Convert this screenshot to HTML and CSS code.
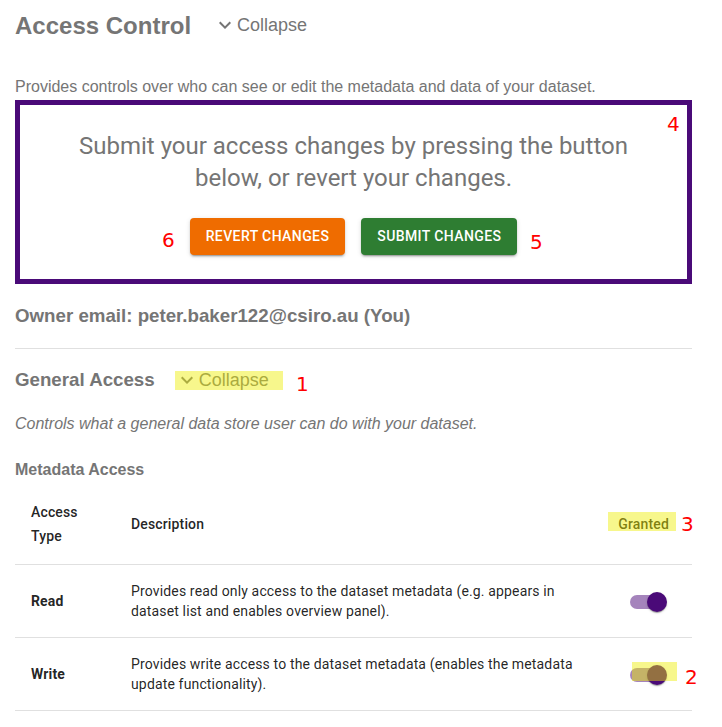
FILE: index.html
```html
<!DOCTYPE html>
<html>
<head>
<meta charset="utf-8">
<link rel="stylesheet" href="styles.css">
</head>
<body>
<div class="page">
  <div class="title-row">
    <h1 class="title">Access Control</h1>
    <span class="collapse collapse-main">
      <svg class="chev" viewBox="0 0 24 24" width="24" height="24"><path d="M7.41 8.59L12 13.17l4.59-4.58L18 10l-6 6-6-6 1.41-1.41z" fill="#757575"/></svg>
      <span>Collapse</span>
    </span>
  </div>
  <p class="lead">Provides controls over who can see or edit the metadata and data of your dataset.</p>

  <div class="submit-box">
    <p class="submit-text">Submit your access changes by pressing the button below, or revert your changes.</p>
    <div class="btn-row">
      <button class="btn btn-revert">Revert changes</button>
      <button class="btn btn-submit">Submit changes</button>
    </div>
  </div>

  <p class="owner">Owner email: peter.baker122@csiro.au (You)</p>
  <hr class="divider">

  <div class="section-row">
    <h2 class="section-title">General Access</h2>
    <span class="collapse collapse-sub">
      <svg class="chev" viewBox="0 0 24 24" width="24" height="24"><path d="M7.41 8.59L12 13.17l4.59-4.58L18 10l-6 6-6-6 1.41-1.41z" fill="#757575"/></svg>
      <span>Collapse</span>
    </span>
  </div>
  <p class="hint">Controls what a general data store user can do with your dataset.</p>
  <h3 class="sub-title">Metadata Access</h3>

  <table class="access-table">
    <colgroup><col class="c1"><col class="c2"><col class="c3"></colgroup>
    <thead>
      <tr><th>Access<br>Type</th><th>Description</th><th class="right"><span class="granted">Granted</span></th></tr>
    </thead>
    <tbody>
      <tr>
        <td class="type">Read</td>
        <td>Provides read only access to the dataset metadata (e.g. appears in dataset list and enables overview panel).</td>
        <td class="right"><span class="switch"><span class="track"></span><span class="thumb"></span></span></td>
      </tr>
      <tr>
        <td class="type">Write</td>
        <td>Provides write access to the dataset metadata (enables the metadata update functionality).</td>
        <td class="right"><span class="switch"><span class="track"></span><span class="thumb"></span></span></td>
      </tr>
    </tbody>
  </table>

  <!-- annotation overlays -->
  <span class="hl hl-1"></span>
  <span class="hl hl-3"></span>
  <span class="hl hl-2"></span>
  <span class="note n4">4</span>
  <span class="note n6">6</span>
  <span class="note n5">5</span>
  <span class="note n1">1</span>
  <span class="note n3">3</span>
  <span class="note n2">2</span>
</div>
</body>
</html>
```
FILE: styles.css
```css
html, body {
  margin: 0;
  padding: 0;
  background: #ffffff;
}
body {
  font-family: "Liberation Sans", Arial, sans-serif;
  color: #757575;
}
.page {
  position: relative;
  padding: 1px 30px 0 15px;
}
.title-row {
  display: flex;
  align-items: center;
  height: 50px;
}
.title {
  margin: 0;
  font-size: 24px;
  font-weight: 700;
  line-height: 50px;
  color: #757575;
}
.collapse {
  display: inline-flex;
  align-items: center;
  font-size: 18px;
  color: #757575;
}
.collapse-main {
  margin-left: 22px;
  margin-top: -2px;
}
.chev {
  display: block;
}
.lead {
  margin: 26px 0 0;
  font-size: 16px;
  line-height: 20px;
}
.submit-box {
  margin-top: 3px;
  border: 5px solid #4a0a78;
  padding: 25px 48px 24px;
  text-align: center;
}
.submit-text {
  margin: 0;
  font-family: Roboto, sans-serif;
  font-size: 24px;
  line-height: 32px;
  color: #757575;
}
.btn-row {
  margin-top: 24px;
  display: flex;
  justify-content: center;
  gap: 16px;
}
.btn {
  font-family: Roboto, sans-serif;
  font-weight: 500;
  font-size: 14px;
  letter-spacing: 0.4px;
  text-transform: uppercase;
  color: #ffffff;
  border: 0;
  border-radius: 4px;
  padding: 6px 16px;
  height: 37px;
  line-height: 25px;
  box-shadow: 0 3px 1px -2px rgba(0,0,0,0.2), 0 2px 2px 0 rgba(0,0,0,0.14), 0 1px 5px 0 rgba(0,0,0,0.12);
}
.btn-revert { background: #ef6c00; }
.btn-submit { background: #2e7d32; }
.owner {
  margin: 20px 0 0;
  font-size: 18.72px;
  font-weight: 700;
  line-height: 24px;
}
.divider {
  margin: 20px 0 0;
  border: 0;
  height: 1px;
  background: #e0e0e0;
}
.section-row {
  margin-top: 19px;
  display: flex;
  align-items: center;
  height: 24px;
}
.section-title {
  margin: 0;
  font-size: 18.72px;
  font-weight: 700;
  line-height: 24px;
}
.collapse-sub {
  margin-left: 20px;
}
.hint {
  margin: 22px 0 0;
  font-size: 16px;
  font-style: italic;
  line-height: 20px;
}
.sub-title {
  margin: 26px 0 0;
  font-size: 16px;
  font-weight: 700;
  line-height: 20px;
}
.access-table {
  margin-top: 4px;
  width: 100%;
  border-collapse: collapse;
  table-layout: fixed;
  font-family: Roboto, sans-serif;
  color: rgba(0,0,0,0.87);
  letter-spacing: 0.15px;
}
.c1 { width: 100px; }
.c3 { width: 80px; }
.access-table th {
  font-weight: 500;
  font-size: 14px;
  line-height: 24px;
  text-align: left;
  padding: 16px;
  border-bottom: 1px solid #e0e0e0;
}
.access-table td {
  font-size: 14px;
  line-height: 20px;
  padding: 16px;
  border-bottom: 1px solid #e0e0e0;
  vertical-align: middle;
}
.access-table td.type {
  font-weight: 700;
}
.access-table .right {
  text-align: right;
  padding-left: 0;
}
.granted {
  margin-right: 7px;
}
.switch {
  position: relative;
  display: inline-block;
  width: 37px;
  height: 20px;
  margin-right: 9px;
  vertical-align: middle;
}
.track {
  position: absolute;
  left: 0;
  top: 3px;
  width: 34px;
  height: 14px;
  border-radius: 7px;
  background: #a584bc;
}
.thumb {
  position: absolute;
  right: 0;
  top: 0;
  width: 20px;
  height: 20px;
  border-radius: 50%;
  background: #4a0a78;
  box-shadow: 0 2px 1px -1px rgba(0,0,0,0.2), 0 1px 1px 0 rgba(0,0,0,0.14), 0 1px 3px 0 rgba(0,0,0,0.12);
}
.hl {
  position: absolute;
  background: rgba(238, 238, 0, 0.45);
}
.hl-1 { left: 175px; top: 371px; width: 108px; height: 19px; }
.hl-3 { left: 608px; top: 512px; width: 68px; height: 19px; }
.hl-2 { left: 632px; top: 662px; width: 45px; height: 19px; }
.note {
  position: absolute;
  font-family: "DejaVu Sans", sans-serif;
  font-size: 20px;
  line-height: 24px;
  color: #ff0000;
}
.n4 { left: 667px; top: 112px; }
.n6 { left: 162px; top: 228px; }
.n5 { left: 530px; top: 230px; }
.n1 { left: 296px; top: 372px; }
.n3 { left: 681px; top: 512px; }
.n2 { left: 685px; top: 665px; }
```
